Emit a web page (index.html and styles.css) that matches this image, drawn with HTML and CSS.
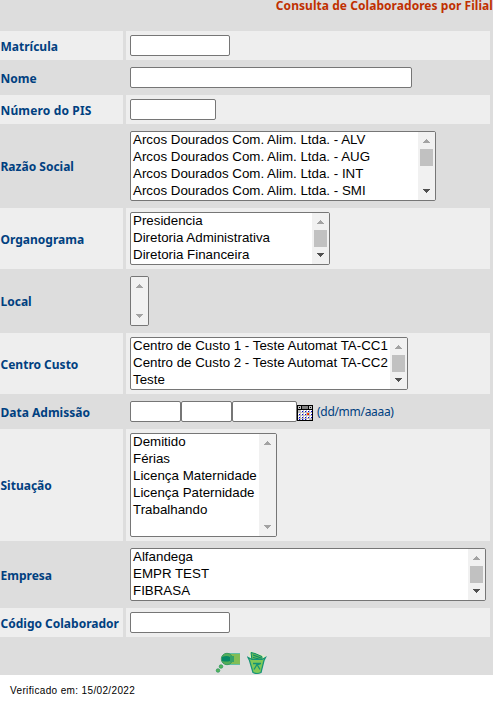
FILE: index.html
```
<!DOCTYPE html>
<html lang="pt-BR">
<head>
<meta charset="utf-8">
<title>Consulta de Colaboradores por Filial</title>
<link rel="stylesheet" href="styles.css">
</head>
<body>
<svg class="defs" aria-hidden="true">
  <symbol id="up" viewBox="0 0 7 4"><path d="M3 0h1v1h1v1h1v1h1v1H0V3h1V2h1V1h1z"/></symbol>
  <symbol id="down" viewBox="0 0 7 4"><path d="M0 0h7v1H6v1H5v1H4v1H3V3H2V2H1V1H0z"/></symbol>
</svg>
<form class="panel">
  <h1 class="title">Consulta de Colaboradores por Filial</h1>
  <div class="grid">
    <label class="label">Matrícula</label><div class="field"><input class="input w100"></div>
    <label class="label dark">Nome</label><div class="field dark"><input class="input w282"></div>
    <label class="label pis">Número do PIS</label><div class="field"><input class="input w86"></div>
    <label class="label dark">Razão Social</label>
    <div class="field dark"><div class="list razao">
      <ul><li>Arcos Dourados Com. Alim. Ltda. - ALV</li><li>Arcos Dourados Com. Alim. Ltda. - AUG</li><li>Arcos Dourados Com. Alim. Ltda. - INT</li><li>Arcos Dourados Com. Alim. Ltda. - SMI</li></ul>
      <div class="bar"><svg class="arrow off"><use href="#up"/></svg><i class="thumb"></i><svg class="arrow end"><use href="#down"/></svg></div>
    </div></div>
    <label class="label">Organograma</label>
    <div class="field"><div class="list organo">
      <ul><li>Presidencia</li><li>Diretoria Administrativa</li><li>Diretoria Financeira</li></ul>
      <div class="bar"><svg class="arrow off"><use href="#up"/></svg><i class="thumb"></i><svg class="arrow end"><use href="#down"/></svg></div>
    </div></div>
    <label class="label dark">Local</label>
    <div class="field dark"><div class="list local">
      <ul></ul>
      <div class="bar"><svg class="arrow off"><use href="#up"/></svg><svg class="arrow off end"><use href="#down"/></svg></div>
    </div></div>
    <label class="label">Centro Custo</label>
    <div class="field"><div class="list centro">
      <ul><li>Centro de Custo 1 - Teste Automat TA-CC1</li><li>Centro de Custo 2 - Teste Automat TA-CC2</li><li>Teste</li></ul>
      <div class="bar"><svg class="arrow off"><use href="#up"/></svg><i class="thumb"></i><svg class="arrow end"><use href="#down"/></svg></div>
    </div></div>
    <label class="label dark">Data Admissão</label>
    <div class="field dark"><input class="input w51"><input class="input w51"><input class="input w65">
      <svg class="calendar" viewBox="0 0 16 16" shape-rendering="crispEdges">
        <path fill="#000" d="M0 0h16v16H0z"/><path fill="#c0c0c0" d="M1 1h3v3H1zM12 1h3v3h-3z"/><path fill="#808080" d="M5 1h6v3H5z"/><path d="M2 2h1v1H2zM13 2h1v1h-1z"/>
        <path fill="#c0c0c0" d="M1 5h14v10H1z"/>
        <path fill="#fff" d="M4 5h2v2H4zM7 5h2v2H7zM10 5h2v2h-2zM13 5h2v2h-2zM1 8h2v2H1zM4 8h2v2H4zM7 8h2v2H7zM13 8h2v2h-2zM1 11h2v2H1zM4 11h2v2H4zM7 11h2v2H7zM10 11h2v2h-2zM13 11h2v2h-2zM1 14h2v1H1zM4 14h2v1H4zM7 14h2v1H7zM10 14h2v1h-2z"/>
        <path fill="#0000d0" d="M5 6h1v1H5zM8 6h1v1H8zM11 6h1v1h-1zM14 6h1v1h-1zM2 9h1v1H2zM5 9h1v1H5zM8 9h1v1H8zM14 9h1v1h-1zM2 12h1v1H2zM5 12h1v1H5zM8 12h1v1H8zM11 12h1v1h-1zM14 12h1v1h-1zM2 14h1v1H2zM5 14h1v1H5zM8 14h1v1H8z"/>
        <path fill="#f40" d="M10 8h2v2h-2z"/><path fill="#d00" d="M11 9h1v1h-1z"/>
      </svg><span class="hint">(dd/mm/aaaa)</span></div>
    <label class="label">Situação</label>
    <div class="field"><div class="list situacao">
      <ul><li>Demitido</li><li>Férias</li><li>Licença Maternidade</li><li>Licença Paternidade</li><li>Trabalhando</li></ul>
      <div class="bar"><svg class="arrow off"><use href="#up"/></svg><svg class="arrow off end"><use href="#down"/></svg></div>
    </div></div>
    <label class="label dark">Empresa</label>
    <div class="field dark"><div class="list empresa">
      <ul><li>Alfandega</li><li>EMPR TEST</li><li>FIBRASA</li></ul>
      <div class="bar"><svg class="arrow off"><use href="#up"/></svg><i class="thumb"></i><svg class="arrow end"><use href="#down"/></svg></div>
    </div></div>
    <label class="label">Código Colaborador</label><div class="field"><input class="input w100"></div>
  </div>
  <div class="actions">
    <svg class="action" viewBox="0 0 26 24">
      <path fill="#82bd55" d="M12 3h13v10H12z"/><path fill="#63bfa6" d="M12 2h13v1H12zM12 13h13v1H12z"/>
      <circle cx="12" cy="8" r="5.7" fill="#55ad59" stroke="#3b9c60"/>
      <path fill="#078966" d="M7 6q5-2 8 0v4q-4 1-8 0z"/><path fill="#35a269" d="M15 5h4v6h-4z"/>
      <circle cx="6" cy="15.5" r="1.8" fill="#55b65a" stroke="#26935f" stroke-width=".7"/><circle cx="3" cy="19.5" r="1.8" fill="#55b65a" stroke="#26935f" stroke-width=".7"/>
    </svg>
    <svg class="action bin" viewBox="0 0 20 24">
      <path fill="#e4f0c0" d="M2 0l4 1 12 4-1 3H3z"/><path fill="#6dbd55" stroke="#078a6b" d="M4 1.500l4 1 7 3v4H5z"/>
      <path stroke="#078a6b" stroke-width="1.2" d="M6 4l8 3M6 6.500l8 2"/>
      <path fill="#80c857" stroke="#149376" stroke-width="1.2" d="M1 6.500l1.500 3 3.500 12q4 2 8 0l3-12 1.500-3-3.500 2H5z"/>
      <path fill="none" stroke="#149376" stroke-width="1.3" d="M6 12.500h8M7 18.500l3-5 3 5M13 13l-3 1"/>
    </svg>
  </div>
</form>
<p class="note">Verificado em: 15/02/2022</p>
</body>
</html>
```
FILE: styles.css
```
* { box-sizing: border-box; }
body { margin: 0; background: #fff; overflow: hidden; }
.defs { display: none; }
.panel { display: flex; flex-direction: column; height: 675px; background: #ddd; }
.title { flex: none; margin: 0; height: 31px; text-align: right; color: #c03000; font: bold 12px/12px "Noto Sans", sans-serif; letter-spacing: .05px; white-space: nowrap; }
.grid { display: grid; grid-template-columns: 123px 364px; gap: 3px; }
.label { display: flex; align-items: center; padding: 2px 0 0 .5px; background: #eee; color: #004080; font: bold 12px/16px "Noto Sans", sans-serif; white-space: nowrap; }
.pis { letter-spacing: .15px; }
.field { display: flex; align-items: flex-start; padding: 4px; background: #eee; }
.dark { background: #ddd; }
.input { height: 21px; margin: 0; padding: 1px 2px; border: 1px solid #767676; border-radius: 2px; background: #fff; }
.w100 { width: 100px; }
.w282 { width: 282px; }
.w86 { width: 86px; }
.w51 { width: 51px; }
.w65 { width: 65px; }
.list { display: flex; justify-content: space-between; height: 53px; border: 1px solid #767676; border-radius: 2px; background: #fff; overflow: hidden; }
.list ul { margin: -1px 0 0; padding: 0 0 0 2px; list-style: none; color: #000; font: 13.333px/17px "Liberation Sans", sans-serif; white-space: nowrap; }
.list.razao { width: 306px; height: 70px; }
.organo { width: 200px; }
.list.local { width: 19px; height: 50px; }
.local ul { display: none; }
.centro { width: 278px; }
.list.situacao { width: 147px; height: 104px; }
.empresa { width: 356px; }
.bar { display: flex; flex: 0 0 17px; flex-direction: column; align-items: center; padding: 7px 0; background: #f1f1f1; }
.arrow { flex: none; width: 7px; height: 4px; fill: #505050; }
.off { fill: #a3a3a3; }
.end { margin-top: auto; }
.thumb { flex: none; width: 13px; height: 17px; margin-top: 6px; background: #c1c1c1; }
.calendar { width: 16px; height: 16px; margin-top: 4px; }
.hint { margin-left: 4px; color: #004080; font: 12px/21px "Noto Sans", sans-serif; letter-spacing: -.3px; }
.actions { display: flex; gap: 6px; padding: 14px 0 0 215px; }
.action { width: 26px; height: 24px; }
.action.bin { width: 20px; }
.note { margin: 9px 0 0 10px; color: #000; font: 10px/14px "Liberation Sans", sans-serif; letter-spacing: .36px; }
```
